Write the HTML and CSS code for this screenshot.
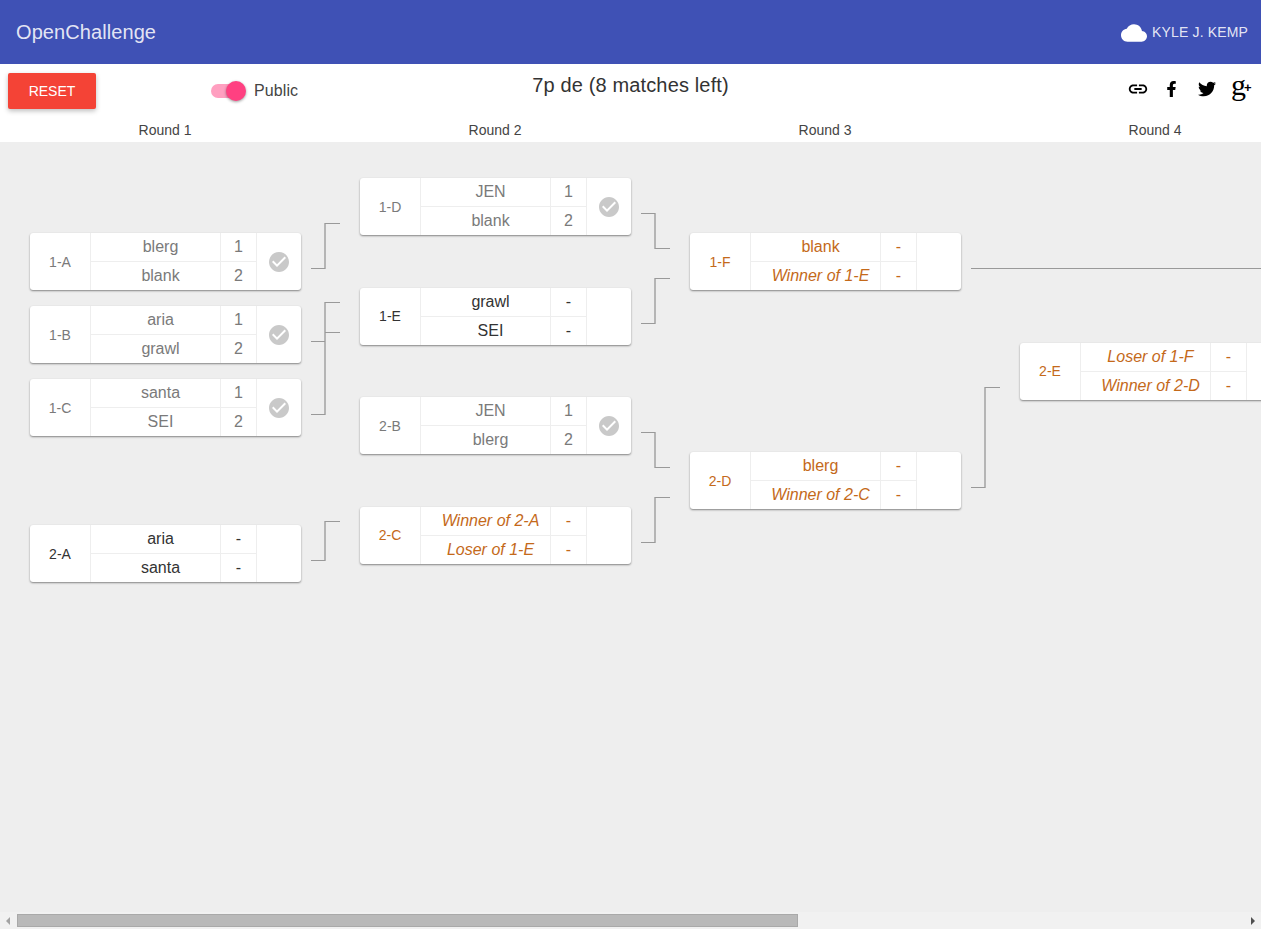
FILE: index.html
```html
<!DOCTYPE html>
<html lang="en">
<head>
<meta charset="utf-8">
<title>OpenChallenge</title>
<link rel="stylesheet" href="styles.css">
</head>
<body>
<header class="appbar">
  <div class="brand">OpenChallenge</div>
  <div class="user">
    <svg class="cloud" viewBox="0 0 24 24"><path d="M19.35 10.04C18.67 6.59 15.64 4 12 4 9.11 4 6.6 5.64 5.35 8.04 2.34 8.36 0 10.91 0 14c0 3.31 2.69 6 6 6h13c2.76 0 5-2.24 5-5 0-2.64-2.05-4.78-4.65-4.96z"/></svg>
    <span>KYLE J. KEMP</span>
  </div>
</header>
<section class="toolbar">
  <div class="tool-left">
    <button class="reset">RESET</button>
    <div class="toggle"><span class="track"><span class="thumb"></span></span><span class="toggle-label">Public</span></div>
  </div>
  <h1 class="event-title">7p de (8 matches left)</h1>
  <div class="tool-right">
    <svg class="i-link" viewBox="0 0 24 24"><path d="M3.9 12c0-1.71 1.39-3.1 3.1-3.1h4V7H7c-2.76 0-5 2.24-5 5s2.24 5 5 5h4v-1.9H7c-1.71 0-3.1-1.39-3.1-3.1zM8 13h8v-2H8v2zm9-6h-4v1.9h4c1.71 0 3.1 1.39 3.1 3.1s-1.39 3.1-3.1 3.1h-4V17h4c2.76 0 5-2.24 5-5s-2.24-5-5-5z"/></svg>
    <svg class="i-fb" viewBox="0 0 320 512"><path d="M279.14 288l14.22-92.66h-88.91v-60.13c0-25.35 12.42-50.06 52.24-50.06h40.42V6.26S260.43 0 225.36 0c-73.22 0-121.08 44.38-121.08 124.72v70.62H22.89V288h81.39v224h100.17V288z"/></svg>
    <svg class="i-tw" viewBox="0 0 512 512"><path d="M459.37 151.716c.325 4.548.325 9.097.325 13.645 0 138.72-105.583 298.558-298.558 298.558-59.452 0-114.68-17.219-161.137-47.106 8.447.974 16.568 1.299 25.34 1.299 49.055 0 94.213-16.568 130.274-44.832-46.132-.975-84.792-31.188-98.112-72.772 6.498.974 12.995 1.624 19.818 1.624 9.421 0 18.843-1.3 27.614-3.573-48.081-9.747-84.143-51.98-84.143-102.985v-1.299c13.969 7.797 30.214 12.67 47.431 13.319-28.264-18.843-46.781-51.005-46.781-87.391 0-19.492 5.197-37.36 14.294-52.954 51.655 63.675 129.3 105.258 216.365 109.807-1.624-7.797-2.599-15.918-2.599-24.04 0-57.828 46.782-104.934 104.934-104.934 30.213 0 57.502 12.67 76.67 33.137 23.715-4.548 46.456-13.32 66.599-25.34-7.798 24.366-24.366 44.833-46.132 57.827 21.117-2.273 41.584-8.122 60.426-16.243-14.292 20.791-32.161 39.308-52.628 54.253z"/></svg>
    <span class="i-gp">g<span class="plus">+</span></span>
  </div>
</section>
<nav class="rounds">
  <div class="round">Round 1</div>
  <div class="round">Round 2</div>
  <div class="round">Round 3</div>
  <div class="round">Round 4</div>
</nav>
<main class="bracket">
  <svg class="wires" width="1261" height="770" viewBox="0 142 1261 770" shape-rendering="crispEdges">
    <g class="w-v">
      <rect x="324" y="223" width="2" height="46"/>
      <rect x="324" y="302" width="2" height="113"/>
      <rect x="324" y="521" width="2" height="40"/>
      <rect x="654" y="213" width="2" height="36"/>
      <rect x="654" y="278" width="2" height="46"/>
      <rect x="654" y="432" width="2" height="36"/>
      <rect x="654" y="497" width="2" height="46"/>
      <rect x="984" y="387" width="2" height="101"/>
    </g>
    <g class="w-h">
      <rect x="311" y="268" width="14" height="1"/><rect x="325" y="223" width="15" height="1"/>
      <rect x="311" y="341" width="14" height="1"/><rect x="311" y="414" width="14" height="1"/>
      <rect x="325" y="302" width="15" height="1"/><rect x="325" y="332" width="15" height="1"/>
      <rect x="311" y="560" width="14" height="1"/><rect x="325" y="521" width="15" height="1"/>
      <rect x="641" y="213" width="14" height="1"/><rect x="655" y="248" width="15" height="1"/>
      <rect x="641" y="323" width="14" height="1"/><rect x="655" y="278" width="15" height="1"/>
      <rect x="641" y="432" width="14" height="1"/><rect x="655" y="467" width="15" height="1"/>
      <rect x="641" y="542" width="14" height="1"/><rect x="655" y="497" width="15" height="1"/>
      <rect x="971" y="268" width="290" height="1"/>
      <rect x="971" y="487" width="14" height="1"/><rect x="985" y="387" width="15" height="1"/>
    </g>
  </svg>

  <article class="match done m-1a">
    <div class="mid">1-A</div><div class="name">blerg</div><div class="score">1</div>
    <div class="status"><svg viewBox="0 0 24 24"><use href="#check"/></svg></div>
    <div class="name">blank</div><div class="score">2</div>
  </article>
  <article class="match done m-1b">
    <div class="mid">1-B</div><div class="name">aria</div><div class="score">1</div>
    <div class="status"><svg viewBox="0 0 24 24"><use href="#check"/></svg></div>
    <div class="name">grawl</div><div class="score">2</div>
  </article>
  <article class="match done m-1c">
    <div class="mid">1-C</div><div class="name">santa</div><div class="score">1</div>
    <div class="status"><svg viewBox="0 0 24 24"><use href="#check"/></svg></div>
    <div class="name">SEI</div><div class="score">2</div>
  </article>
  <article class="match ready m-2a">
    <div class="mid">2-A</div><div class="name">aria</div><div class="score">-</div>
    <div class="status"></div>
    <div class="name">santa</div><div class="score">-</div>
  </article>

  <article class="match done m-1d">
    <div class="mid">1-D</div><div class="name">JEN</div><div class="score">1</div>
    <div class="status"><svg viewBox="0 0 24 24"><use href="#check"/></svg></div>
    <div class="name">blank</div><div class="score">2</div>
  </article>
  <article class="match ready m-1e">
    <div class="mid raised">1-E</div><div class="name">grawl</div><div class="score">-</div>
    <div class="status"></div>
    <div class="name">SEI</div><div class="score">-</div>
  </article>
  <article class="match done m-2b">
    <div class="mid">2-B</div><div class="name">JEN</div><div class="score">1</div>
    <div class="status"><svg viewBox="0 0 24 24"><use href="#check"/></svg></div>
    <div class="name">blerg</div><div class="score">2</div>
  </article>
  <article class="match pending m-2c">
    <div class="mid raised">2-C</div><div class="name tbd">Winner of 2-A</div><div class="score">-</div>
    <div class="status"></div>
    <div class="name tbd">Loser of 1-E</div><div class="score">-</div>
  </article>

  <article class="match pending m-1f">
    <div class="mid">1-F</div><div class="name">blank</div><div class="score">-</div>
    <div class="status"></div>
    <div class="name tbd">Winner of 1-E</div><div class="score">-</div>
  </article>
  <article class="match pending m-2d">
    <div class="mid">2-D</div><div class="name">blerg</div><div class="score">-</div>
    <div class="status"></div>
    <div class="name tbd">Winner of 2-C</div><div class="score">-</div>
  </article>

  <article class="match pending m-2e">
    <div class="mid raised">2-E</div><div class="name tbd">Loser of 1-F</div><div class="score">-</div>
    <div class="status"></div>
    <div class="name tbd">Winner of 2-D</div><div class="score">-</div>
  </article>
</main>
<div class="scrollbar">
  <span class="arrow left"></span>
  <span class="thumb-bar"></span>
  <span class="arrow right"></span>
</div>
<svg class="defs" width="0" height="0"><symbol id="check" viewBox="0 0 24 24"><path d="M12 2C6.48 2 2 6.48 2 12s4.48 10 10 10 10-4.48 10-10S17.52 2 12 2zm-2 15l-5-5 1.41-1.41L10 14.17l7.59-7.59L19 8l-9 9z"/></symbol></svg>
</body>
</html>
```
FILE: styles.css
```css
* { box-sizing: border-box; }
html, body { margin: 0; height: 100%; }
body {
  display: flex;
  flex-direction: column;
  height: 929px;
  overflow: hidden;
  background: #fff;
  color: #333;
  font-family: "Liberation Sans", Arial, sans-serif;
}
.defs { position: absolute; }

.appbar {
  flex: none;
  height: 64px;
  padding: 0 13px 0 16px;
  display: flex;
  align-items: center;
  justify-content: space-between;
  background: #3f51b5;
  color: rgba(255, 255, 255, .87);
}
.brand { font-size: 20px; letter-spacing: .08px; }
.user { display: flex; align-items: center; gap: 5px; font-size: 14px; letter-spacing: .15px; }
.cloud { width: 26px; height: 26px; fill: #fff; margin-top: 2px; }

.toolbar {
  flex: none;
  height: 54px;
  display: grid;
  grid-template-columns: 1fr auto 1fr;
  align-items: start;
}
.tool-left { display: flex; align-items: center; padding: 9px 0 0 8px; }
.reset {
  width: 88px;
  height: 36px;
  border: 0;
  border-radius: 2px;
  background: #f44336;
  color: #fff;
  font: 14px "Liberation Sans", Arial, sans-serif;
  box-shadow: 0 2px 5px rgba(0, 0, 0, .26);
}
.toggle { display: flex; align-items: center; margin-left: 115px; }
.track {
  position: relative;
  display: block;
  width: 34px;
  height: 14px;
  border-radius: 7px;
  background: #ff9fc0;
}
.thumb {
  position: absolute;
  top: -3px;
  right: -1px;
  width: 20px;
  height: 20px;
  border-radius: 50%;
  background: #ff4081;
  box-shadow: 0 1px 3px rgba(0, 0, 0, .4);
}
.toggle-label { margin-left: 9px; font-size: 16px; color: #444; letter-spacing: .1px; }
.event-title {
  margin: 10px 0 0;
  font-size: 20px;
  font-weight: 400;
  line-height: 23px;
  color: #333;
  letter-spacing: .15px;
}
.tool-right { display: flex; justify-content: flex-end; align-items: center; height: 36px; margin-top: 7px; padding-right: 8px; }
.tool-right svg { fill: #000; display: block; }
.i-link { width: 22px; height: 22px; }
.i-fb { width: 11px; height: 16px; margin-left: 17px; }
.i-tw { width: 18px; height: 18px; margin-left: 21px; }
.i-gp {
  margin-left: 15px;
  width: 22px;
  font: 30px/30px "Liberation Serif", serif;
  color: #000;
  white-space: nowrap;
  margin-top: -9px;
}
.plus { font: bold 13px "Liberation Sans", sans-serif; vertical-align: 3px; margin-left: -2px; }

.rounds { flex: none; height: 24px; display: flex; }
.round { flex: none; width: 330px; text-align: center; font-size: 14px; line-height: 24px; color: #444; }

.bracket {
  position: relative;
  flex: 1;
  overflow: hidden;
  background: #eee;
}
.wires { position: absolute; left: 0; top: 0; }
.w-v { fill: #b5b5b5; }
.w-h { fill: #999; }

.match {
  position: absolute;
  width: 271px;
  height: 57px;
  display: grid;
  grid-template-columns: 61px 130px 36px 44px;
  grid-template-rows: 29px 28px;
  background: #fff;
  border-radius: 3px;
  box-shadow: 0 1px 2px rgba(0, 0, 0, .45);
  font-size: 16px;
}
.match > div { display: flex; align-items: center; justify-content: center; }
.mid { grid-row: 1 / 3; font-size: 14px; border-right: 1px solid #eee; }
.mid.raised { padding-bottom: 2px; }
.status { grid-column: 4; grid-row: 1 / 3; }
.status svg { width: 24px; height: 24px; fill: #c9c9c9; }
.name { padding-left: 10px; border-right: 1px solid #eee; }
.score { border-right: 1px solid #eee; }
.name:nth-child(2), .score:nth-child(3) { border-bottom: 1px solid #eee; }
.tbd { font-style: italic; }
.done { color: #7a7a7a; }
.ready { color: #333; }
.pending { color: #c4691a; }

.m-1a { left: 30px; top: 91px; }
.m-1b { left: 30px; top: 164px; }
.m-1c { left: 30px; top: 237px; }
.m-2a { left: 30px; top: 383px; }
.m-1d { left: 360px; top: 36px; }
.m-1e { left: 360px; top: 146px; }
.m-2b { left: 360px; top: 255px; }
.m-2c { left: 360px; top: 365px; }
.m-1f { left: 690px; top: 91px; }
.m-2d { left: 690px; top: 310px; }
.m-2e { left: 1020px; top: 201px; }

.scrollbar {
  flex: none;
  height: 17px;
  display: flex;
  align-items: center;
  background: #f1f1f1;
  position: relative;
  padding-left: 17px;
}
.thumb-bar {
  display: block;
  width: 781px;
  height: 13px;
  background: #b9b9b9;
  border: 1px solid #a9a9a9;
}
.arrow { position: absolute; top: 5px; width: 0; height: 0; border-style: solid; border-width: 4px; border-color: transparent; }
.arrow.left { left: 2px; border-right-color: #a3a3a3; }
.arrow.right { right: 2px; border-left-color: #505050; }
```
